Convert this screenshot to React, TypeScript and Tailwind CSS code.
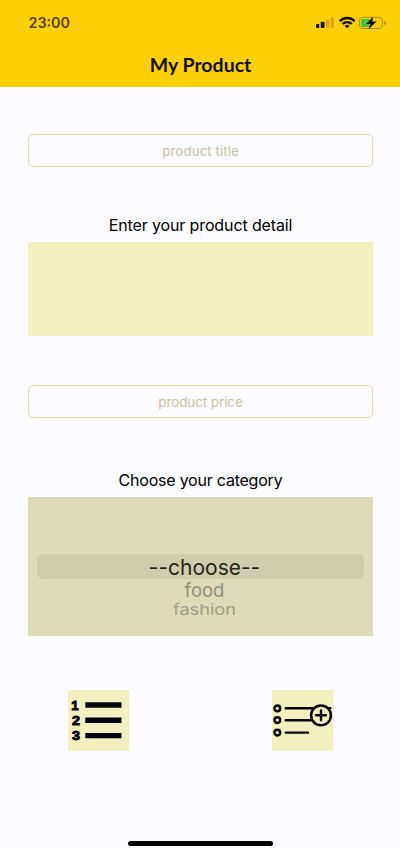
import React from "react";

function StatusIcons() {
  return (
    <svg width="72" height="14" viewBox="0 0 72 14" className="block">
      <rect x="1" y="8" width="3.3" height="4" rx="0.8" fill="#160f00" />
      <rect x="5.8" y="5.8" width="3.7" height="6.2" rx="0.8" fill="#160f00" />
      <rect x="11" y="3.4" width="3.4" height="8.6" rx="0.8" fill="#d9a90c" />
      <rect x="15.6" y="1" width="3.4" height="11" rx="0.8" fill="#d9a90c" />
      <g fill="none" stroke="#160f00" strokeWidth="2.3">
        <path d="M24.8 5.1a10.4 10.4 0 0 1 14.8 0" />
        <path d="M27.6 8a6.5 6.5 0 0 1 9.2 0" />
      </g>
      <path d="M29.8 9.9a3.5 3.5 0 0 1 4.8 0L32.2 12.3z" fill="#160f00" />
      <rect x="44.5" y="1.3" width="23" height="11.2" rx="3.4" fill="none" stroke="#b78b08" />
      <path d="M69 5v4c1.2-.4 1.8-1.1 1.8-2s-.6-1.6-1.8-2z" fill="#b78b08" />
      <path d="M48 3h6v8h-6a2 2 0 0 1-2-2V5a2 2 0 0 1 2-2z" fill="#3cc64a" />
      <path d="M58 .8 51 7.9h4.1L53.6 13.2l8-7.6h-4.3z" fill="#160f00" />
    </svg>
  );
}

function NumberedListIcon() {
  return (
    <svg width="61" height="61" viewBox="0 0 61 61" className="block">
      <g fill="#050505" stroke="#050505" strokeWidth="0.9" fontFamily="Liberation Sans, sans-serif" fontWeight="700" fontSize="13.2">
        <text x="3.2" y="19.8">1</text>
        <text x="4" y="35" textLength="8" lengthAdjust="spacingAndGlyphs">2</text>
        <text x="4" y="50.2" textLength="8" lengthAdjust="spacingAndGlyphs">3</text>
      </g>
      <path d="M17.3 15h36.2M17.3 30.2h36.2M17.3 45.6h36.2" stroke="#050505" strokeWidth="5.4" />
    </svg>
  );
}

function AddListIcon() {
  return (
    <svg width="61" height="61" viewBox="0 0 61 61" className="block" fill="none" stroke="#050505" strokeLinecap="round">
      <g strokeWidth="2.4">
        <circle cx="5.3" cy="18.4" r="2.9" />
        <circle cx="5.3" cy="30.1" r="2.9" />
        <circle cx="5.3" cy="42.6" r="2.9" />
        <path d="M13.7 18.3H58.3M13.7 30.2h26M13.7 42.6h22.4" />
      </g>
      <circle cx="49" cy="25.3" r="9.9" fill="#f2f0bf" strokeWidth="2.5" />
      <path d="M44.1 25.3h9.8M49 20.4v9.8" strokeWidth="2.4" />
    </svg>
  );
}

const fieldClass =
  "block h-[33px] w-full rounded-[5px] border border-[#dfdea9] bg-transparent text-center text-[13.5px] text-[#aaa] outline-none placeholder:text-[#c9c5a5]";

export default function App() {
  return (
    <div className="flex h-[848px] w-[400px] flex-col overflow-hidden bg-[#fcfbff] font-[Inter,sans-serif] text-black">
      <header className="h-[87px] shrink-0 bg-[#fcd006]">
        <div className="flex h-[46px] items-center justify-between pr-[13px] pl-[28.5px]">
          <span className="text-[14.3px] font-semibold text-[#5a3d00]">23:00</span>
          <StatusIcons />
        </div>
        <h1 className="pl-px text-center font-[Lato,sans-serif] text-[19.5px] leading-[38px] font-bold text-[#140e00]">My Product</h1>
      </header>
      <main className="flex flex-col pr-[27px] pl-7">
        <input className={`${fieldClass} mt-[47px]`} placeholder="product title" />
        <label className="mt-[46px] text-center text-base leading-6 tracking-[-0.12px]">Enter your product detail</label>
        <textarea className="mt-[5px] block h-[94px] w-full resize-none bg-[#f2f0bf] outline-none" />
        <input className={`${fieldClass} mt-[49px] tracking-[-0.1px]`} placeholder="product price" />
        <label className="mt-[50px] text-center text-base leading-6 tracking-[-0.22px]">Choose your category</label>
        <div className="mt-[5px] flex h-[139px] flex-col bg-[#dddbb9] px-[9px] pt-[57px] text-center">
          <div className="h-[25px] rounded-[6px] bg-[#cfcdae] pl-2 text-[21px] leading-[27px] text-[#26251b]">--choose--</div>
          <div className="pl-2 text-[18.5px] leading-[22px] text-[#929079]">food</div>
          <div className="h-[17px] origin-center scale-y-[.82] pl-2 text-[18.2px] leading-[17px] text-[#a19f87]">fashion</div>
        </div>
        <div className="mt-[54px] flex justify-between pr-10 pl-10">
          <button className="size-[61px] bg-[#f2f0bf]"><NumberedListIcon /></button>
          <button className="size-[61px] bg-[#f2f0bf]"><AddListIcon /></button>
        </div>
      </main>
      <div className="mt-auto mb-[2px] ml-[128px] h-[5px] w-[145px] shrink-0 rounded-full bg-black" />
    </div>
  );
}
